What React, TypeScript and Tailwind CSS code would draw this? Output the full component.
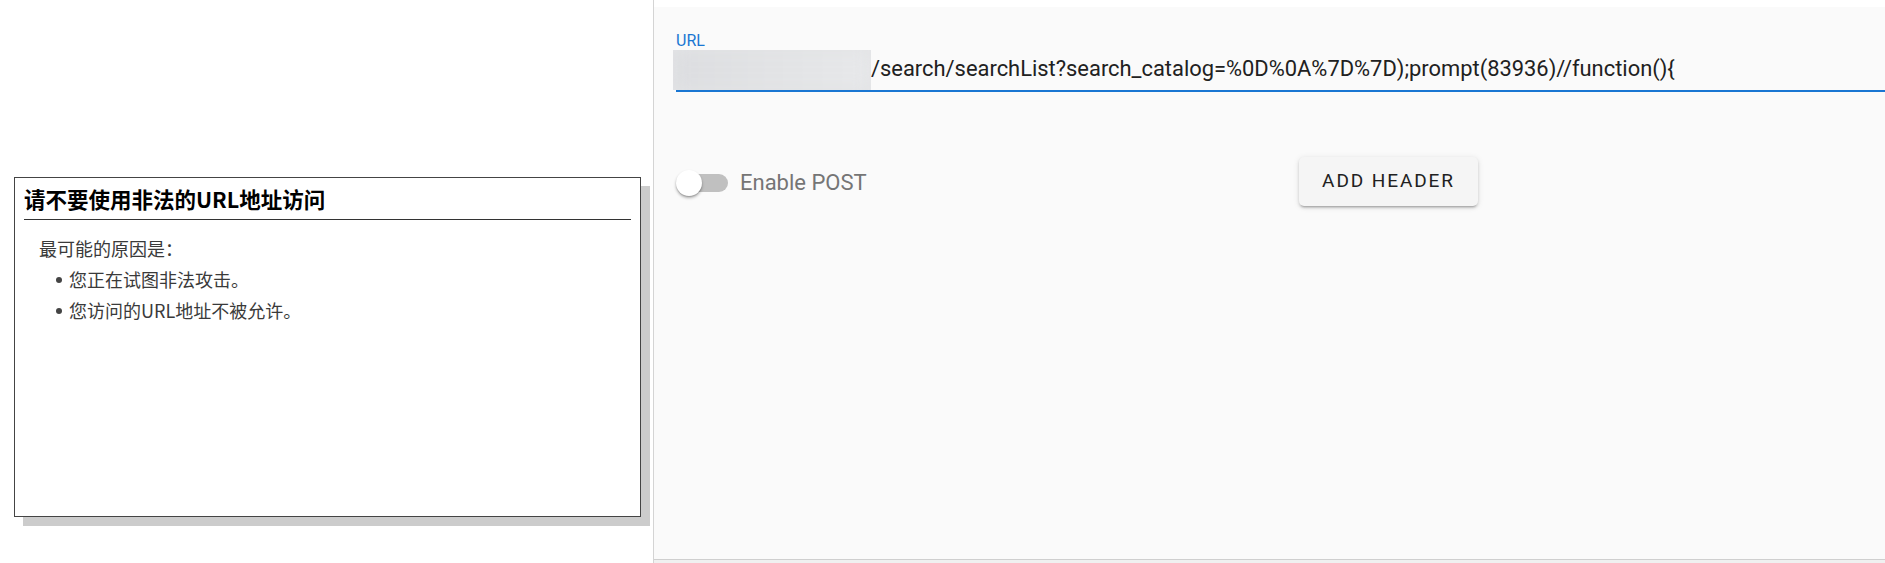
import React from "react";

const cjk = { fontFamily: '"Noto Sans CJK SC", "Noto Sans", sans-serif' };
const roboto = { fontFamily: 'Roboto, "Liberation Sans", sans-serif' };

function Bullet({ children }: { children: React.ReactNode }) {
  return (
    <div className="flex items-center">
      <span className="ml-[17px] mr-[7px] inline-block h-[6px] w-[6px] rounded-full bg-[#444]" />
      <span>{children}</span>
    </div>
  );
}

export default function App() {
  return (
    <div className="flex h-[563px] w-[1885px] overflow-hidden bg-white">
      {/* Left: error page */}
      <div className="w-[653px] shrink-0 bg-white pl-[14px] pt-[177px]" style={cjk}>
        <div className="h-[340px] w-[627px] border border-[#444] bg-white px-[9px] pt-[5px] shadow-[9px_9px_0_#cccccc]">
          <div className="border-b border-[#333] pb-[4px] text-[21.5px] font-bold leading-[32px] text-black">
            请不要使用非法的URL地址访问
          </div>
          <div className="mt-[13px] pl-[15px] text-[18px] leading-[31px] text-[#3a3a3a]">
            <div>最可能的原因是：</div>
            <Bullet>您正在试图非法攻击。</Bullet>
            <Bullet>您访问的URL地址不被允许。</Bullet>
          </div>
        </div>
      </div>

      <div className="w-px shrink-0 bg-[#d4d4d4]" />

      {/* Right: request panel */}
      <div className="flex min-w-0 flex-1 flex-col" style={roboto}>
        <div className="h-[7px] bg-white" />
        <div className="flex-1 overflow-hidden bg-[#fafafa] pl-[22px]">
          <div className="mt-[26px] text-[16px] leading-[16px] text-[#1976d2]">URL</div>
          <div className="flex h-[43px] w-full items-start border-b-2 border-[#1976d2]">
            <div className="-ml-[3px] mt-[1px] h-[40px] w-[198px] shrink-0 overflow-hidden bg-[#e3e4e6]">
              <div className="h-full w-full bg-gradient-to-r from-[#dcdde0] via-[#e2e3e5] to-[#e7e8ea] blur-sm" />
            </div>
            <span className="whitespace-nowrap pt-[8px] text-[21.9px] leading-[24px] text-[#212121]">
              /search/searchList?search_catalog=%0D%0A%7D%7D);prompt(83936)//function(){"{"}
            </span>
          </div>

          <div className="mt-[65px] flex h-[49px] items-center">
            <div className="flex w-[623px] items-center">
              <div className="relative mt-[2px] h-[26px] w-[52px]">
                <div className="absolute left-[2px] top-[4px] h-[18px] w-[50px] rounded-full bg-[#c0c0c0]" />
                <div className="absolute left-0 top-0 h-[26px] w-[26px] rounded-full bg-white shadow-[0_2px_3px_rgba(0,0,0,0.3),0_1px_1px_rgba(0,0,0,0.14)]" />
              </div>
              <span className="ml-[12px] mt-[2px] text-[22px] leading-[24px] text-[#757575]">Enable POST</span>
            </div>
            <button className="flex h-[49px] w-[179px] items-center justify-center rounded-[5px] bg-[#f5f5f5] text-[19px] font-normal tracking-[0.1em] text-[#212121] shadow-[0_3px_2px_-2px_rgba(0,0,0,0.2),0_2px_3px_0_rgba(0,0,0,0.14),0_1px_6px_0_rgba(0,0,0,0.1)]">
              ADD HEADER
            </button>
          </div>
        </div>
        <div className="h-px bg-[#cfcfcf]" />
        <div className="h-[3px] bg-[#f0f0f0]" />
      </div>
    </div>
  );
}
